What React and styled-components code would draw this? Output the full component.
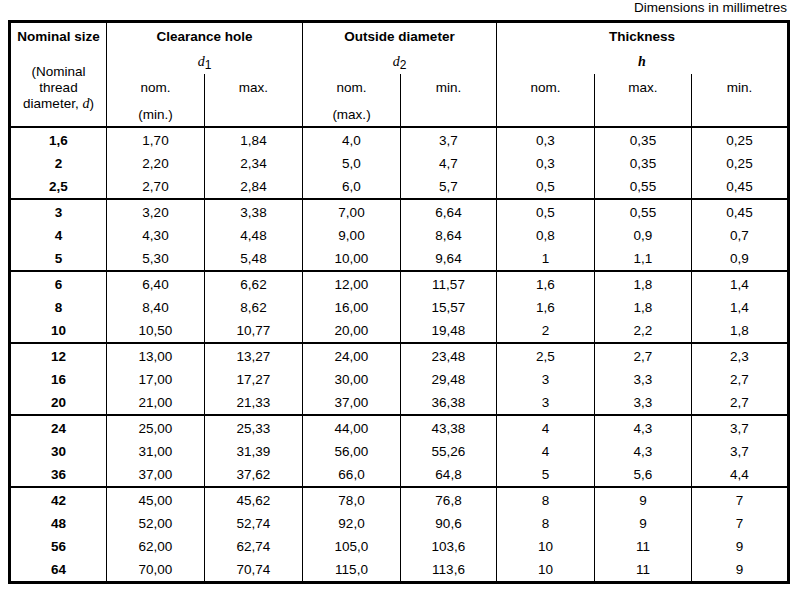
import React from 'react';
import styled, { createGlobalStyle } from 'styled-components';

const GlobalStyle = createGlobalStyle`
  * { box-sizing: border-box; }
  body {
    margin: 0;
    background: #ffffff;
    color: #000000;
    font-family: "Liberation Sans", Arial, sans-serif;
    font-size: 13.5px;
  }
`;

const COLUMNS = '95px 98px 98px 98px 96px 98px 97px 96px';

const groups = [
  [
    ['1,6', '1,70', '1,84', '4,0', '3,7', '0,3', '0,35', '0,25'],
    ['2', '2,20', '2,34', '5,0', '4,7', '0,3', '0,35', '0,25'],
    ['2,5', '2,70', '2,84', '6,0', '5,7', '0,5', '0,55', '0,45'],
  ],
  [
    ['3', '3,20', '3,38', '7,00', '6,64', '0,5', '0,55', '0,45'],
    ['4', '4,30', '4,48', '9,00', '8,64', '0,8', '0,9', '0,7'],
    ['5', '5,30', '5,48', '10,00', '9,64', '1', '1,1', '0,9'],
  ],
  [
    ['6', '6,40', '6,62', '12,00', '11,57', '1,6', '1,8', '1,4'],
    ['8', '8,40', '8,62', '16,00', '15,57', '1,6', '1,8', '1,4'],
    ['10', '10,50', '10,77', '20,00', '19,48', '2', '2,2', '1,8'],
  ],
  [
    ['12', '13,00', '13,27', '24,00', '23,48', '2,5', '2,7', '2,3'],
    ['16', '17,00', '17,27', '30,00', '29,48', '3', '3,3', '2,7'],
    ['20', '21,00', '21,33', '37,00', '36,38', '3', '3,3', '2,7'],
  ],
  [
    ['24', '25,00', '25,33', '44,00', '43,38', '4', '4,3', '3,7'],
    ['30', '31,00', '31,39', '56,00', '55,26', '4', '4,3', '3,7'],
    ['36', '37,00', '37,62', '66,0', '64,8', '5', '5,6', '4,4'],
  ],
  [
    ['42', '45,00', '45,62', '78,0', '76,8', '8', '9', '7'],
    ['48', '52,00', '52,74', '92,0', '90,6', '8', '9', '7'],
    ['56', '62,00', '62,74', '105,0', '103,6', '10', '11', '9'],
    ['64', '70,00', '70,74', '115,0', '113,6', '10', '11', '9'],
  ],
];

const subColumns = [
  { col: 2, top: 'nom.', bottom: '(min.)' },
  { col: 3, top: 'max.' },
  { col: 4, top: 'nom.', bottom: '(max.)' },
  { col: 5, top: 'min.' },
  { col: 6, top: 'nom.' },
  { col: 7, top: 'max.' },
  { col: 8, top: 'min.' },
];

export default function App() {
  return (
    <>
      <GlobalStyle />
      <Page>
        <Caption>Dimensions in millimetres</Caption>
        <Table>
          <Header>
            <TitleCell $col="1 / span 1">Nominal size</TitleCell>
            <NoteCell>
              <span>(Nominal</span>
              <span>thread</span>
              <span>
                diameter, <Var>d</Var>)
              </span>
            </NoteCell>

            <TitleCell $col="2 / span 2" $divided>Clearance hole</TitleCell>
            <TitleCell $col="4 / span 2" $divided>Outside diameter</TitleCell>
            <TitleCell $col="6 / span 3" $divided>Thickness</TitleCell>

            <SymbolCell $col="2 / span 2">
              <Var>d</Var>
              <Sub>1</Sub>
            </SymbolCell>
            <SymbolCell $col="4 / span 2">
              <Var>d</Var>
              <Sub>2</Sub>
            </SymbolCell>
            <SymbolCell $col="6 / span 3">
              <Var $bold>h</Var>
            </SymbolCell>

            {subColumns.map((s) => (
              <SubCell key={s.col} $col={s.col}>
                <span>{s.top}</span>
                {s.bottom && <Lower>{s.bottom}</Lower>}
              </SubCell>
            ))}
          </Header>

          {groups.map((rows, gi) => (
            <Group key={gi}>
              {rows.map((row) => (
                <Row key={row[0]}>
                  {row.map((value, ci) => (
                    <Cell key={ci} $bold={ci === 0}>
                      {value}
                    </Cell>
                  ))}
                </Row>
              ))}
            </Group>
          ))}
        </Table>
      </Page>
    </>
  );
}

const Page = styled.div`
  width: 794px;
  padding: 0 4px 0 8px;
`;

const Caption = styled.div`
  height: 20px;
  line-height: 16px;
  padding-right: 3px;
  text-align: right;
`;

const Table = styled.div`
  width: 782px;
  border: 3px solid #000;
`;

const Header = styled.div`
  display: grid;
  grid-template-columns: ${COLUMNS};
  grid-template-rows: 27px 24px 52px;
`;

const TitleCell = styled.div`
  grid-column: ${(p) => p.$col};
  grid-row: 1;
  font-weight: bold;
  text-align: center;
  line-height: 27px;
  border-left: ${(p) => (p.$divided ? '1px solid #000' : 'none')};
`;

const NoteCell = styled.div`
  grid-column: 1;
  grid-row: 2 / span 2;
  display: flex;
  flex-direction: column;
  align-items: center;
  padding-top: 14px;
  line-height: 16px;
`;

const SymbolCell = styled.div`
  grid-column: ${(p) => p.$col};
  grid-row: 2;
  border-left: 1px solid #000;
  text-align: center;
  line-height: 24px;
`;

const SubCell = styled.div`
  grid-column: ${(p) => p.$col};
  grid-row: 3;
  border-left: 1px solid #000;
  display: flex;
  flex-direction: column;
  align-items: center;
  padding-top: 6px;
  line-height: 16px;
`;

const Lower = styled.span`
  margin-top: 11px;
`;

const Var = styled.i`
  font-family: "Liberation Serif", "Times New Roman", serif;
  font-size: 14px;
  font-weight: ${(p) => (p.$bold ? 'bold' : 'normal')};
`;

const Sub = styled.span`
  font-size: 12px;
  position: relative;
  top: 3px;
`;

const Group = styled.div`
  border-top: 2px solid #000;
`;

const Row = styled.div`
  display: grid;
  grid-template-columns: ${COLUMNS};
  height: 23px;

  &:first-child {
    height: 24px;
  }
`;

const Cell = styled.div`
  display: flex;
  align-items: center;
  justify-content: center;
  font-weight: ${(p) => (p.$bold ? 'bold' : 'normal')};

  & + & {
    border-left: 1px solid #000;
  }
`;
